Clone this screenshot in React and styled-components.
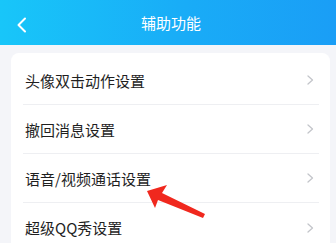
import React from "react";
import styled, { createGlobalStyle } from "styled-components";

const Global = createGlobalStyle`
  html, body { margin: 0; padding: 0; }
  body {
    background: #f4f5f9;
    font-family: "Noto Sans CJK SC", "Noto Sans", sans-serif;
    width: 336px;
    height: 243px;
    overflow: hidden;
  }
`;

const Page = styled.div`
  position: relative;
  width: 336px;
  height: 243px;
  background: #f4f5f9;
  overflow: hidden;
`;

const Header = styled.header`
  height: 45px;
  background: linear-gradient(90deg, #18c6f9 0%, #19acf7 55%, #1a9ef6 100%);
  display: flex;
  align-items: center;
  justify-content: center;
  position: relative;
`;

const BackButton = styled.button`
  position: absolute;
  left: 14px;
  top: 16px;
  width: 14px;
  height: 18px;
  border: 0;
  padding: 0;
  background: none;
  display: flex;
  align-items: center;
  justify-content: center;
`;

const Title = styled.h1`
  margin: 0 0 0 6px;
  color: #fff;
  font-size: 15px;
  font-weight: 400;
  line-height: 1;
`;

const Card = styled.div`
  margin: 8px 6px 0 11px;
  background: #fff;
  border-radius: 8px;
  padding-top: 3px;
`;

const Row = styled.div`
  height: 49px;
  margin: 0 11px 0 12px;
  padding: 0 5px 0 2px;
  box-sizing: border-box;
  display: flex;
  align-items: center;
  justify-content: space-between;
  border-bottom: ${(p) => (p.last ? "none" : "1px solid #eeeff2")};
`;

const Label = styled.span`
  font-size: 15px;
  color: #1f1f1f;
  line-height: 1;
`;

const Overlay = styled.svg`
  position: absolute;
  left: 0;
  top: 0;
  pointer-events: none;
`;

const Chevron = () => (
  <svg width="7" height="10" viewBox="0 0 7 10">
    <path d="M1 1 L5.5 5 L1 9" fill="none" stroke="#c3c5ca" strokeWidth="1.3" strokeLinecap="round" strokeLinejoin="round" />
  </svg>
);

const items = ["头像双击动作设置", "撤回消息设置", "语音/视频通话设置", "超级QQ秀设置"];

export default function App() {
  return (
    <Page>
      <Global />
      <Header>
        <BackButton aria-label="返回">
          <svg width="11" height="16" viewBox="0 0 11 16">
            <path d="M9 1.5 L2.5 8 L9 14.5" fill="none" stroke="#fff" strokeWidth="2" strokeLinecap="round" strokeLinejoin="round" />
          </svg>
        </BackButton>
        <Title>辅助功能</Title>
      </Header>
      <Card>
        {items.map((t, i) => (
          <Row key={t} last={i === items.length - 1}>
            <Label>{t}</Label>
            <Chevron />
          </Row>
        ))}
      </Card>
      <Overlay width="336" height="243" viewBox="0 0 336 243">
        <polygon
          points="147,191 167,185 162,193 205,214 203,218 158,200 155,208"
          fill="#f0281e"
        />
      </Overlay>
    </Page>
  );
}
